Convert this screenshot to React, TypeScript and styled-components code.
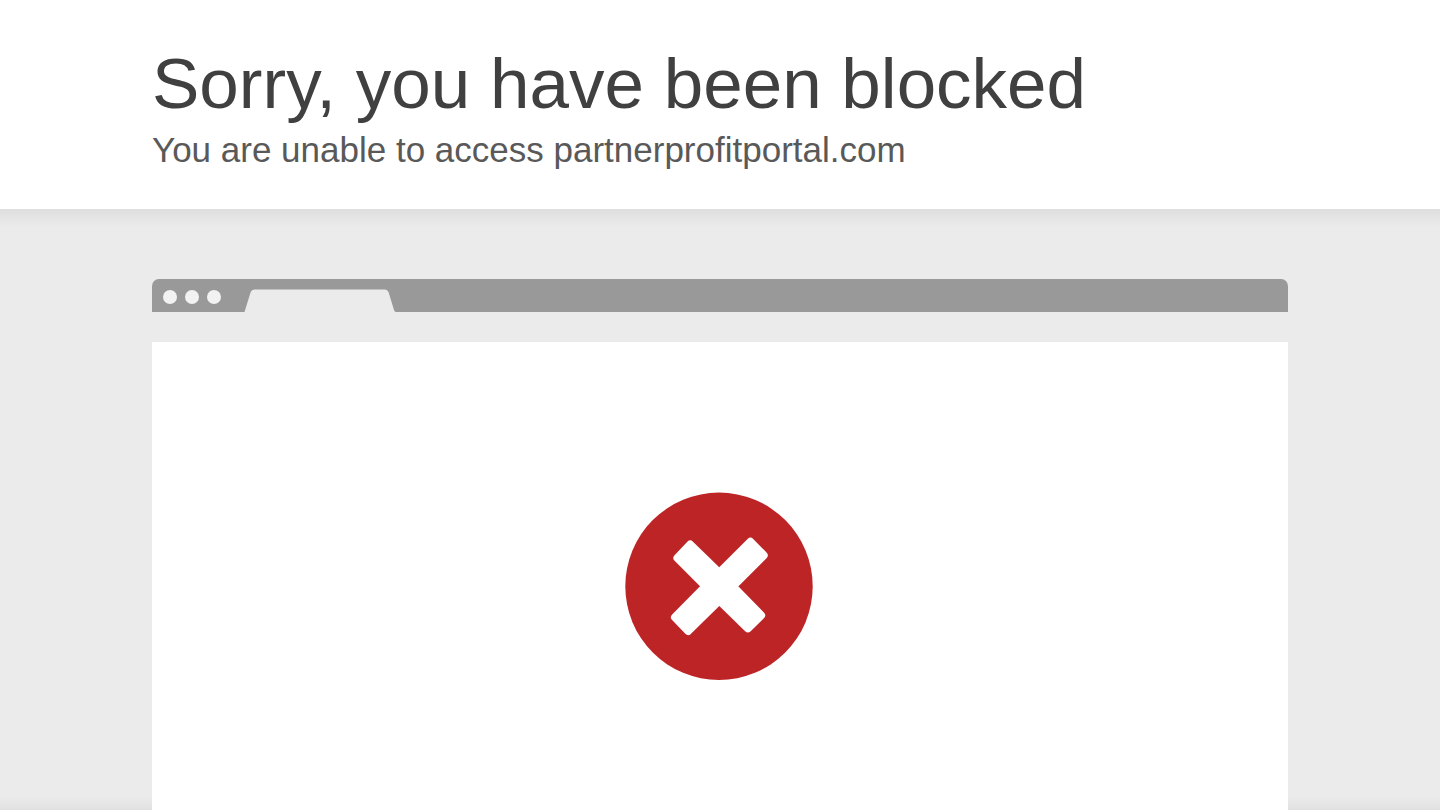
import React from "react";
import styled, { createGlobalStyle } from "styled-components";

const GlobalStyle = createGlobalStyle`
  *, *::before, *::after { box-sizing: border-box; }
  html, body { margin: 0; padding: 0; }
  body {
    background: #fff;
    font-family: "Liberation Sans", Arial, Helvetica, sans-serif;
  }
`;

const Page = styled.div`
  display: flex;
  flex-direction: column;
  min-height: 100vh;
`;

const Container = styled.div`
  width: 100%;
  max-width: 1136px;
  margin: 0 auto;
`;

const Header = styled.header`
  padding: 48px 0 39px;
  background: #fff;
`;

const Title = styled.h1`
  margin: 0;
  color: #404040;
  font-size: 71px;
  font-weight: 400;
  line-height: 72px;
`;

const Subtitle = styled.h2`
  margin: 0;
  padding-top: 10px;
  color: #595959;
  font-size: 35px;
  font-weight: 400;
  line-height: 40px;
`;

const Highlight = styled.main`
  display: flex;
  flex: 1;
  padding-top: 70px;
  background: linear-gradient(
    to bottom,
    #dedede,
    #ebebeb 18px,
    #ebebeb calc(100% - 14px),
    #e1e1e1
  );
`;

const BrowserWindow = styled(Container)`
  display: flex;
  flex-direction: column;
`;

const TitleBar = styled.div`
  display: flex;
  align-items: flex-end;
  height: 33px;
  padding-left: 11px;
  border-radius: 7px 7px 0 0;
  background: #999;
`;

const Dots = styled.div`
  display: flex;
  gap: 8px;
  padding-bottom: 8px;
`;

const Dot = styled.span`
  width: 14px;
  height: 14px;
  border-radius: 50%;
  background: #f2f2f2;
`;

const TabShape = styled.svg`
  display: block;
  margin-left: 23px;
`;

const Viewport = styled.div`
  display: flex;
  flex: 1;
  justify-content: center;
  margin-top: 30px;
  padding: 150px 0 128px;
  background: #fff;
`;

const ErrorIcon = styled.svg`
  display: block;
`;

export default function App() {
  return (
    <Page>
      <GlobalStyle />
      <Header>
        <Container>
          <Title>Sorry, you have been blocked</Title>
          <Subtitle>You are unable to access partnerprofitportal.com</Subtitle>
        </Container>
      </Header>
      <Highlight>
        <BrowserWindow>
          <TitleBar>
            <Dots>
              <Dot />
              <Dot />
              <Dot />
            </Dots>
            <TabShape width="152" height="23" viewBox="0 0 152 23" aria-hidden="true">
              <path
                d="M0.5 23 L6.6 3.2 Q7.6 0.5 10.4 0.5 H141 Q143.6 0.5 144.6 3.2 L150 21 Q150.6 23 152 23 Z"
                fill="#ebebeb"
              />
            </TabShape>
          </TitleBar>
          <Viewport>
            <ErrorIcon width="190" height="188" viewBox="0 0 190 188" role="img" aria-label="Blocked">
              <circle cx="94" cy="94.3" r="93.7" fill="#bd2426" />
              <path
                d="M65.2 52.6 L52.4 65.9 L80.6 94.3 L50 125.3 L63.2 139 L94.3 108.4 L122.9 136.3 L136.1 123.3 L107.7 94.3 L138.7 63.3 L125.4 49.8 L94.3 80.9 Z"
                fill="#fff"
                stroke="#fff"
                strokeWidth="8"
                strokeLinejoin="round"
              />
            </ErrorIcon>
          </Viewport>
        </BrowserWindow>
      </Highlight>
    </Page>
  );
}
